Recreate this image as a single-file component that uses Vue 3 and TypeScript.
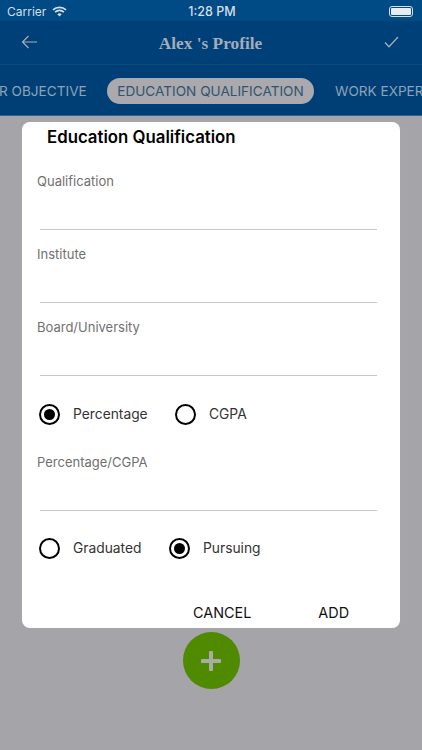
<script setup lang="ts">
const fields1 = ['Qualification', 'Institute', 'Board/University']
const tabs = [
  { label: 'R OBJECTIVE', active: false },
  { label: 'EDUCATION QUALIFICATION', active: true },
  { label: 'WORK EXPERIENCE', active: false },
]
</script>

<template>
  <div class="page">
    <header class="head">
      <div class="status">
        <div class="st-left">
          <span>Carrier</span>
          <svg width="15" height="11" viewBox="0 0 15 11" class="wifi">
            <path d="M7.500 10.600 5.300 8.200a3.200 3.200 0 0 1 4.400 0Z" fill="#d8dee6" />
            <path d="M1 3.900a9.400 9.400 0 0 1 13 0M3.100 6.100a6.400 6.400 0 0 1 8.800 0" fill="none" stroke="#d8dee6" stroke-width="1.700" />
          </svg>
        </div>
        <span class="time">1:28 PM</span>
        <div class="batt"><i class="batt-fill"></i></div>
      </div>
      <div class="nav">
        <svg class="ico" width="16" height="14" viewBox="0 0 16 14">
          <path d="M16 7H1.500M7.500 1 1.500 7l6 6" fill="none" stroke="#a4adb8" stroke-width="1.200" />
        </svg>
        <span class="nav-title">Alex 's Profile</span>
        <svg class="ico" width="15" height="12" viewBox="0 0 15 12">
          <path d="M1 6.500 5 10.800 14 1" fill="none" stroke="#a4adb8" stroke-width="1.300" />
        </svg>
      </div>
      <div class="tabs">
        <span v-for="t in tabs" :key="t.label" class="tab" :class="{ active: t.active }">{{ t.label }}</span>
      </div>
    </header>

    <main class="body">
      <section class="dialog">
        <h2 class="title">Education Qualification</h2>
        <div class="field first" v-for="f in fields1" :key="f">
          <label class="lbl">{{ f }}</label>
          <div class="line"></div>
        </div>
        <div class="radios r1">
          <div class="radio w1"><i class="dot on"></i><span>Percentage</span></div>
          <div class="radio"><i class="dot"></i><span>CGPA</span></div>
        </div>
        <div class="field pc">
          <label class="lbl">Percentage/CGPA</label>
          <div class="line"></div>
        </div>
        <div class="radios r2">
          <div class="radio w2"><i class="dot"></i><span>Graduated</span></div>
          <div class="radio"><i class="dot on"></i><span>Pursuing</span></div>
        </div>
        <div class="actions">
          <span class="btn cancel">CANCEL</span>
          <span class="btn add">ADD</span>
        </div>
      </section>
      <div class="fab">
        <svg width="20" height="20" viewBox="0 0 20 20">
          <path d="M10 1.500v17M1.500 10h17" stroke="#a9aca6" stroke-width="4" stroke-linecap="round" />
        </svg>
      </div>
    </main>
  </div>
</template>

<style>
html, body { margin: 0; padding: 0; background: #a4a4a9; }
</style>

<style scoped>
.page {
  width: 422px;
  height: 750px;
  overflow: hidden;
  background: #a4a4a9;
  font-family: Inter, "Liberation Sans", sans-serif;
  display: flex;
  flex-direction: column;
}
.head {
  background: #003f75;
  height: 116px;
  border-bottom: 1px solid #33628c;
  box-sizing: border-box;
  display: flex;
  flex-direction: column;
}
.status {
  height: 21px;
  background: #004a85;
  color: #d8dee6;
  font-size: 12px;
  display: grid;
  grid-template-columns: 1fr auto 1fr;
  align-items: center;
  padding: 1px 7px 0;
  box-sizing: border-box;
}
.st-left { display: flex; align-items: center; gap: 6px; }
.wifi { display: block; }
.time { font-weight: 500; font-size: 12.500px; padding-left: 2px; }
.batt {
  justify-self: end;
  width: 24px;
  height: 11px;
  box-sizing: border-box;
  border: 1px solid #d8dee6;
  border-radius: 3px;
  padding: 1px;
  margin-right: 2px;
}
.batt-fill { display: block; height: 100%; background: #e8ecf0; border-radius: 1px; }
.nav {
  height: 44px;
  border-bottom: 1px solid #0a4a7f;
  box-sizing: border-box;
  background: #004079;
  display: flex;
  align-items: center;
  justify-content: space-between;
  padding: 0 23px 1px 21px;
}
.ico { display: block; }
.nav-title {
  font-family: "Liberation Serif", serif;
  font-weight: 700;
  font-size: 17.300px;
  color: #a4adb8;
  padding-top: 3px;
}
.tabs {
  flex: 1;
  display: flex;
  align-items: center;
  white-space: nowrap;
  overflow: hidden;
  padding-top: 1px;
}
.tab {
  font-size: 13.600px;
  color: #8ca3b9;
  flex: none;
}
.tab:first-child { margin-left: -1px; width: 108px; }
.tab.active {
  background: #a9a9ae;
  color: #33546f;
  border-radius: 13px;
  height: 26px;
  line-height: 26px;
  padding: 0;
  box-sizing: border-box;
  width: 207px;
  text-align: center;
}
.tab:last-child { margin-left: 21px; }
.body {
  flex: 1;
  display: flex;
  flex-direction: column;
  align-items: center;
  padding-top: 6px;
}
.dialog {
  width: 378px;
  height: 506px;
  box-sizing: border-box;
  background: #fff;
  border-radius: 8px;
  padding: 5px 23px 0 15px;
  display: flex;
  flex-direction: column;
  box-shadow: 0 0 1px #bbb;
}
.title {
  margin: 0 0 0 10px;
  height: 20px;
  line-height: 20px;
  font-size: 16.800px;
  font-weight: 600;
  color: #000;
}
.field { display: flex; flex-direction: column; }
.field.first { padding-top: 16px; }
.field.first:nth-child(2) { padding-top: 26px; }
.lbl {
  font-size: 13px;
  line-height: 16px;
  color: #707070;
}
.line {
  height: 1px;
  background: #c8c8c8;
  margin: 40px 0 0 3px;
}
.radios { display: flex; align-items: center; color: #333; font-size: 13.800px; }
.r1 { margin-top: 27px; height: 22px; }
.r2 { margin-top: 26px; height: 22px; }
.radio { display: flex; align-items: center; gap: 13px; margin-left: 2px; }
.w1 { width: 134px; }
.w2 { width: 128px; }
.dot {
  width: 21px;
  height: 21px;
  box-sizing: border-box;
  border: 2px solid #000;
  border-radius: 50%;
  display: flex;
  align-items: center;
  justify-content: center;
  flex: none;
}
.dot.on::after {
  content: "";
  width: 11px;
  height: 11px;
  border-radius: 50%;
  background: #000;
}
.field.pc { margin-top: 29px; }
.actions {
  margin-top: auto;
  display: flex;
  height: 30px;
  align-items: center;
  font-size: 14.400px;
  color: #111;
  padding-bottom: 1px;
}
.cancel { margin-left: 156px; }
.add { margin-left: 67px; }
.fab {
  margin-top: 4px;
  width: 57px;
  height: 57px;
  border-radius: 50%;
  background: #4f8a00;
  display: flex;
  align-items: center;
  justify-content: center;
}
</style>
